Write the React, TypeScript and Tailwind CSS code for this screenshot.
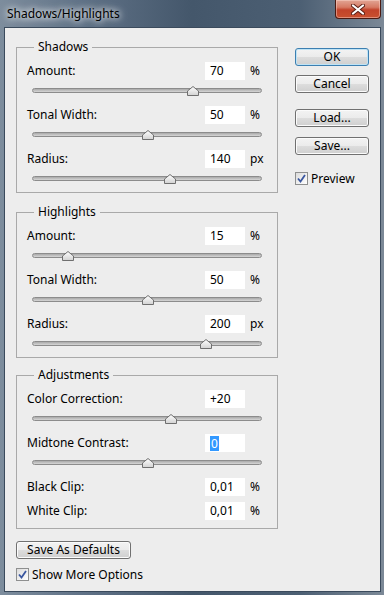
import React from 'react';

const font = { fontFamily: '"Noto Sans", "Open Sans", Arial, sans-serif' };

const Thumb: React.FC<{ x: number }> = ({ x }) => (
  <svg
    width="12"
    height="10"
    viewBox="0 0 12 10"
    className="absolute top-[-3px]"
    style={{ left: x - 6 }}
  >
    <defs>
      <linearGradient id="tg" x1="0" y1="0" x2="0" y2="1">
        <stop offset="0" stopColor="#ffffff" />
        <stop offset="1" stopColor="#d2d2d2" />
      </linearGradient>
    </defs>
    <path d="M0.5 9.5 L0.5 5 L6 0.5 L11.5 5 L11.5 9.5 Z" fill="url(#tg)" stroke="#6f6f6f" strokeLinejoin="round" />
  </svg>
);

const Slider: React.FC<{ pos: number; last?: boolean }> = ({ pos, last }) => (
  <div className={`${last ? 'h-[24px]' : 'h-[26px]'} pt-[8px] pl-[15px]`}>
    <div className="relative w-[230px] h-[5px] rounded-full border border-[#8c8c8c] bg-[linear-gradient(to_bottom,#a9a9a9,#d6d6d6)]">
      <Thumb x={pos} />
    </div>
  </div>
);

const Row: React.FC<{ label: string; value: string; unit?: string; selected?: boolean }> = ({ label, value, unit, selected }) => (
  <div className="flex items-center h-[18px] pl-[10px]">
    <span className="w-[178px]">{label}</span>
    <div className="w-[40px] h-[18px] bg-white flex items-center pl-[5px]">
      {selected ? (
        <span className="bg-[#3399ff] text-white leading-[15px] px-[1px]">{value}</span>
      ) : (
        <span>{value}</span>
      )}
    </div>
    {unit && <span className="ml-[5px]">{unit}</span>}
  </div>
);

const Group: React.FC<{ title: string; className?: string; children: React.ReactNode }> = ({ title, className, children }) => (
  <fieldset className={`border border-[#a9a9a9] w-[262px] ${className ?? ''}`}>
    <legend className="ml-[17px] px-[4px] leading-[14px]">{title}</legend>
    <div className="pt-[8px]">{children}</div>
  </fieldset>
);

const Button: React.FC<{ label: string; primary?: boolean; className?: string }> = ({ label, primary, className }) => (
  <div
    className={`h-[18px] flex items-center justify-center rounded-[3px] border leading-none bg-[linear-gradient(to_bottom,#f3f3f3_0%,#ebebeb_50%,#dddddd_50%,#cfcfcf_100%)] ${
      primary
        ? 'border-[#3c7fb1] shadow-[inset_0_0_0_1px_#bfe3f5]'
        : 'border-[#707070] shadow-[inset_0_0_0_1px_#fbfbfb]'
    } ${className ?? ''}`}
  >
    {label}
  </div>
);

const Checkbox: React.FC<{ label: string }> = ({ label }) => (
  <div className="flex items-center h-[13px]">
    <div className="w-[13px] h-[13px] border border-[#8e8f8f] bg-[linear-gradient(135deg,#dcdcdc,#ffffff)] p-[1px]">
      <svg width="9" height="9" viewBox="0 0 9 9">
        <path d="M1 4.5 L3.5 7.5 L8 1" fill="none" stroke="#3a57a0" strokeWidth="1.8" />
      </svg>
    </div>
    <span className="ml-[3px]">{label}</span>
  </div>
);

export default function App() {
  return (
    <div
      className="w-[384px] h-[595px] overflow-hidden text-[12px] text-black bg-[linear-gradient(90deg,#7d8d9d_0%,#5f7186_22%,#44576b_50%,#4c5f73_78%,#7c8997_100%)]"
      style={font}
    >
      {/* Title bar */}
      <div className="h-[27px] flex items-start justify-between">
        <span className="mt-[5px] ml-[7px] text-[12px] leading-[18px] [text-shadow:0_0_6px_#ffffff,0_0_10px_#ffffff]">
          Shadows/Highlights
        </span>
        <div className="mr-[3px] w-[46px] h-[19px] rounded-b-[4px] border border-t-0 border-[#4a1a12] flex items-center justify-center bg-[linear-gradient(to_bottom,#e2a594_0%,#d67a64_40%,#c2432a_55%,#c8502f_100%)] shadow-[inset_0_0_0_1px_rgba(255,220,210,0.45)]">
          <svg width="14" height="11" viewBox="0 0 14 11">
            <path d="M2 1.5 L12 9.5 M12 1.5 L2 9.5" stroke="#5a1e14" strokeWidth="4" strokeLinecap="round" />
            <path d="M2 1.5 L12 9.5 M12 1.5 L2 9.5" stroke="#ffffff" strokeWidth="2.2" strokeLinecap="round" />
          </svg>
        </div>
      </div>

      {/* Client area */}
      <div className="ml-[4px] w-[377px] h-[565px] border border-[#3a4a5c] bg-[#ededed] flex">
        <div className="pl-[11px] pt-[12px] flex flex-col">
          <Group title="Shadows">
            <Row label="Amount:" value="70" unit="%" />
            <Slider pos={160} />
            <Row label="Tonal Width:" value="50" unit="%" />
            <Slider pos={115} />
            <Row label="Radius:" value="140" unit="px" />
            <Slider pos={137} last />
          </Group>

          <Group title="Highlights" className="mt-[12px]">
            <Row label="Amount:" value="15" unit="%" />
            <Slider pos={35} />
            <Row label="Tonal Width:" value="50" unit="%" />
            <Slider pos={115} />
            <Row label="Radius:" value="200" unit="px" />
            <Slider pos={173} last />
          </Group>

          <Group title="Adjustments" className="mt-[10px]">
            <Row label="Color Correction:" value="+20" />
            <Slider pos={138} />
            <Row label="Midtone Contrast:" value="0" selected />
            <Slider pos={115} />
            <Row label="Black Clip:" value="0,01" unit="%" />
            <div className="h-[6px]" />
            <Row label="White Clip:" value="0,01" unit="%" />
            <div className="h-[8px]" />
          </Group>

          <Button label="Save As Defaults" className="mt-[12px] w-[115px]" />
          <div className="mt-[9px]">
            <Checkbox label="Show More Options" />
          </div>
        </div>

        <div className="ml-[17px] pt-[20px] flex flex-col w-[74px]">
          <Button label="OK" primary />
          <Button label="Cancel" className="mt-[9px]" />
          <Button label="Load..." className="mt-[16px]" />
          <Button label="Save..." className="mt-[10px]" />
          <div className="mt-[17px]">
            <Checkbox label="Preview" />
          </div>
        </div>
      </div>
    </div>
  );
}
